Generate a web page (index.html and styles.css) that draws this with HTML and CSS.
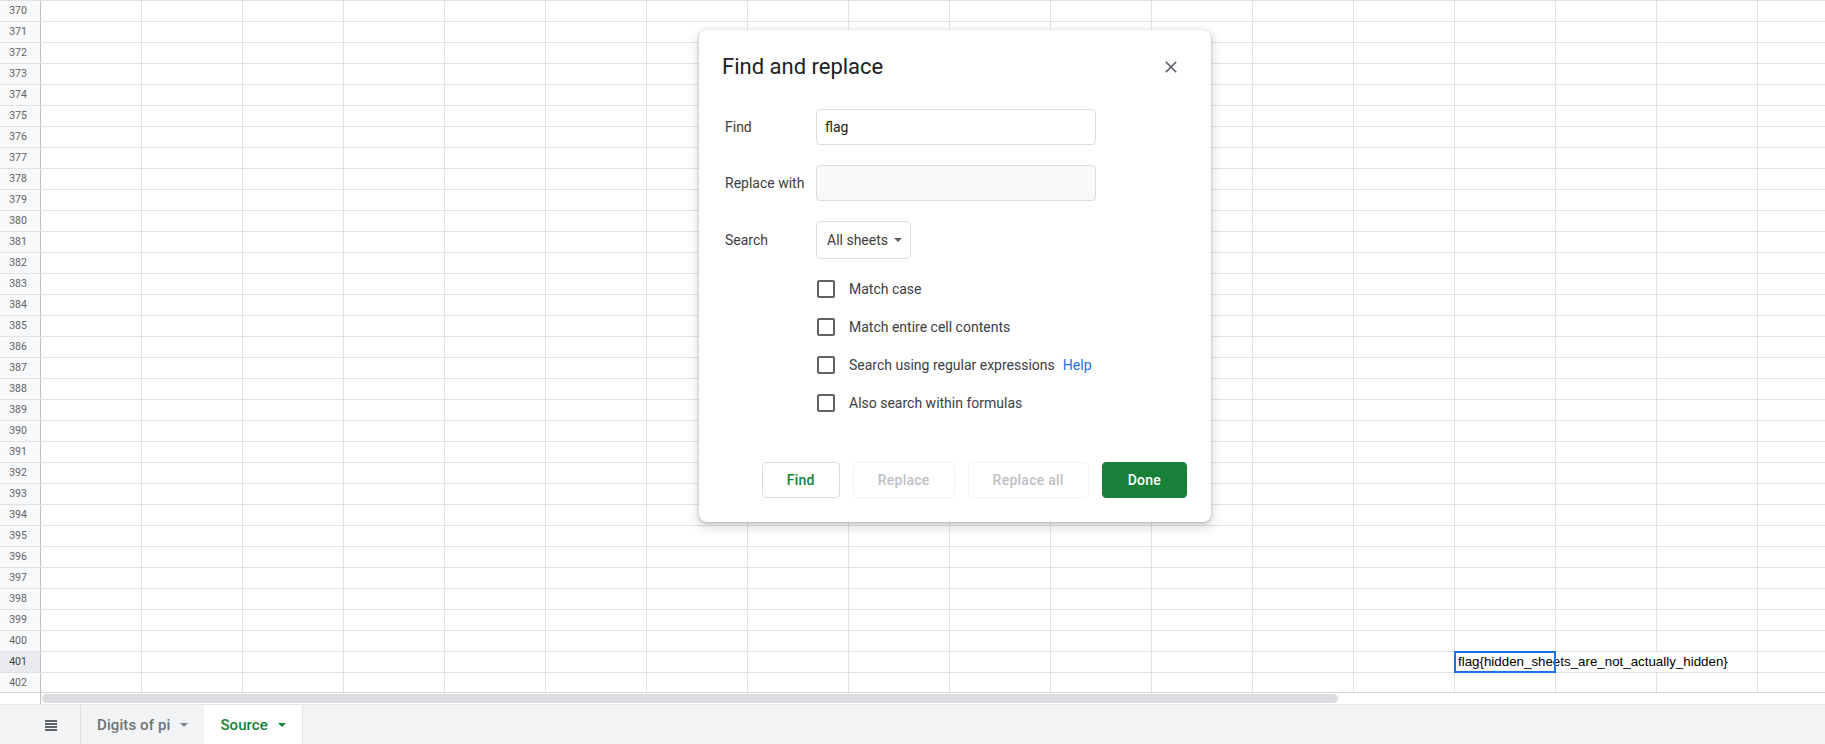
FILE: index.html
```html
<!DOCTYPE html>
<html lang="en">
<head>
<meta charset="utf-8">
<title>Source - Google Sheets</title>
<link rel="stylesheet" href="styles.css">
</head>
<body>
<div class="app">
  <div class="sheet">
    <div class="row"><div class="rh">370</div><div class="cells"></div></div>
    <div class="row"><div class="rh">371</div><div class="cells"></div></div>
    <div class="row"><div class="rh">372</div><div class="cells"></div></div>
    <div class="row"><div class="rh">373</div><div class="cells"></div></div>
    <div class="row"><div class="rh">374</div><div class="cells"></div></div>
    <div class="row"><div class="rh">375</div><div class="cells"></div></div>
    <div class="row"><div class="rh">376</div><div class="cells"></div></div>
    <div class="row"><div class="rh">377</div><div class="cells"></div></div>
    <div class="row"><div class="rh">378</div><div class="cells"></div></div>
    <div class="row"><div class="rh">379</div><div class="cells"></div></div>
    <div class="row"><div class="rh">380</div><div class="cells"></div></div>
    <div class="row"><div class="rh">381</div><div class="cells"></div></div>
    <div class="row"><div class="rh">382</div><div class="cells"></div></div>
    <div class="row"><div class="rh">383</div><div class="cells"></div></div>
    <div class="row"><div class="rh">384</div><div class="cells"></div></div>
    <div class="row"><div class="rh">385</div><div class="cells"></div></div>
    <div class="row"><div class="rh">386</div><div class="cells"></div></div>
    <div class="row"><div class="rh">387</div><div class="cells"></div></div>
    <div class="row"><div class="rh">388</div><div class="cells"></div></div>
    <div class="row"><div class="rh">389</div><div class="cells"></div></div>
    <div class="row"><div class="rh">390</div><div class="cells"></div></div>
    <div class="row"><div class="rh">391</div><div class="cells"></div></div>
    <div class="row"><div class="rh">392</div><div class="cells"></div></div>
    <div class="row"><div class="rh">393</div><div class="cells"></div></div>
    <div class="row"><div class="rh">394</div><div class="cells"></div></div>
    <div class="row"><div class="rh">395</div><div class="cells"></div></div>
    <div class="row"><div class="rh">396</div><div class="cells"></div></div>
    <div class="row"><div class="rh">397</div><div class="cells"></div></div>
    <div class="row"><div class="rh">398</div><div class="cells"></div></div>
    <div class="row"><div class="rh">399</div><div class="cells"></div></div>
    <div class="row"><div class="rh">400</div><div class="cells"></div></div>
    <div class="row row-active"><div class="rh">401</div><div class="cells cells-grid"><div class="flag-cell"><span class="cell-text">flag{hidden_sheets_are_not_actually_hidden}</span><div class="selection"></div></div></div></div>
    <div class="row"><div class="rh">402</div><div class="cells"></div></div>
  </div>
  <div class="hscroll">
    <div class="hscroll-corner"></div>
    <div class="hscroll-track"><div class="hscroll-thumb"></div></div>
  </div>
  <div class="tabbar">
    <div class="tab-menu">
      <svg class="menu-icon" width="12" height="11" viewBox="0 0 12 11"><rect x="0" y="0" width="12" height="2" fill="#5f6368"/><rect x="0" y="3" width="12" height="2" fill="#5f6368"/><rect x="0" y="6" width="12" height="2" fill="#5f6368"/><rect x="0" y="9" width="12" height="2" fill="#5f6368"/></svg>
    </div>
    <div class="tab"><span class="tab-name">Digits of pi</span><span class="tab-arrow"></span></div>
    <div class="tab tab-active"><span class="tab-name">Source</span><span class="tab-arrow"></span></div>
  </div>
</div>

<div class="dialog">
  <div class="dialog-head">
    <h1 class="dialog-title">Find and replace</h1>
    <svg class="close-icon" width="20" height="20" viewBox="0 0 24 24"><path fill="#5f6368" d="M19 6.41L17.59 5 12 10.59 6.41 5 5 6.41 10.59 12 5 17.59 6.41 19 12 13.41 17.59 19 19 17.59 13.41 12z"/></svg>
  </div>
  <div class="field field-find">
    <label class="field-label">Find</label>
    <div class="text-input">flag</div>
  </div>
  <div class="field field-replace">
    <label class="field-label">Replace with</label>
    <div class="text-input text-input-disabled"></div>
  </div>
  <div class="field field-search">
    <label class="field-label">Search</label>
    <div class="select"><span>All sheets</span><span class="select-arrow"></span></div>
  </div>
  <div class="options">
    <div class="option"><span class="checkbox"></span><span>Match case</span></div>
    <div class="option"><span class="checkbox"></span><span>Match entire cell contents</span></div>
    <div class="option"><span class="checkbox"></span><span>Search using regular expressions</span><a class="help">Help</a></div>
    <div class="option"><span class="checkbox"></span><span>Also search within formulas</span></div>
  </div>
  <div class="buttons">
    <button class="btn btn-outline">Find</button>
    <button class="btn btn-disabled">Replace</button>
    <button class="btn btn-disabled">Replace all</button>
    <button class="btn btn-primary">Done</button>
  </div>
</div>
</body>
</html>
```

FILE: styles.css
```css
html, body {
  margin: 0;
  padding: 0;
}
body {
  width: 1825px;
  height: 744px;
  overflow: hidden;
  background: #fff;
  font-family: Roboto, "Liberation Sans", Arial, sans-serif;
  position: relative;
}
.app {
  display: flex;
  flex-direction: column;
  height: 744px;
}

/* grid */
.sheet {
  height: 692px;
  overflow: hidden;
  border-bottom: 1px solid #d4d4d4;
  flex: none;
}
.row {
  display: flex;
  height: 21px;
  box-sizing: border-box;
  border-top: 1px solid #e2e2e3;
}
.rh {
  width: 41px;
  flex: none;
  box-sizing: border-box;
  padding-right: 4px;
  background: #f8f9fa;
  border-right: 1px solid #c0c0c0;
  color: #5f6368;
  font-size: 10.5px;
  line-height: 20px;
  text-align: center;
}
.row-active .rh {
  background: #e8eaed;
  color: #3c4043;
}
.cells {
  flex: 1;
  background: repeating-linear-gradient(to right, transparent 0 100px, #e2e2e3 100px 101px);
}
.cells-grid {
  display: grid;
  grid-template-columns: repeat(18, 101px);
}
.flag-cell {
  grid-column: 15 / span 3;
  width: 302px;
  height: 20px;
  background: #fff;
  position: relative;
}
.cell-text {
  display: block;
  padding-left: 3px;
  font-family: "Liberation Sans", Arial, sans-serif;
  font-size: 13.333px;
  line-height: 20px;
  color: #000;
  white-space: nowrap;
}
.selection {
  position: absolute;
  left: -1px;
  top: -1px;
  width: 102px;
  height: 22px;
  box-sizing: border-box;
  border: 2px solid #1a73e8;
}

/* horizontal scroll */
.hscroll {
  display: flex;
  height: 11px;
  flex: none;
}
.hscroll-corner {
  width: 41px;
  box-sizing: border-box;
  border-right: 1px solid #c0c0c0;
}
.hscroll-track {
  flex: 1;
  padding-top: 1px;
}
.hscroll-thumb {
  margin-left: 1px;
  width: 1296px;
  height: 9px;
  border-radius: 5px;
  background: #dadce0;
}

/* tab bar */
.tabbar {
  flex: 1;
  display: flex;
  background: #f1f3f4;
  border-top: 1px solid #e3e5e8;
}
.tab-menu {
  width: 81px;
  box-sizing: border-box;
  border-right: 1px solid #dadce0;
  display: flex;
  align-items: center;
  padding-left: 45px;
}
.menu-icon {
  display: block;
  margin-top: 1px;
}
.tab {
  display: flex;
  align-items: center;
  gap: 10px;
  padding: 0 16px;
  font-size: 15px;
  font-weight: 500;
  color: #6f7377;
  letter-spacing: 0.1px;
}
.tab-arrow {
  width: 0;
  height: 0;
  border-left: 4px solid transparent;
  border-right: 4px solid transparent;
  border-top: 4px solid #80868b;
}
.tab-active {
  background: #fff;
  color: #188038;
  border-right: 1px solid #e3e5e8;
}
.tab-active .tab-arrow {
  border-top-color: #188038;
}

/* dialog */
.dialog {
  position: absolute;
  left: 699px;
  top: 30px;
  width: 512px;
  box-sizing: border-box;
  padding: 23px 24px 24px;
  background: #fff;
  border-radius: 8px;
  box-shadow: 0 4px 8px 3px rgba(60, 64, 67, 0.15), 0 1px 3px rgba(60, 64, 67, 0.3);
  color: #3c4043;
  font-size: 14px;
}
.dialog-head {
  display: flex;
  align-items: center;
  justify-content: space-between;
  height: 28px;
}
.dialog-title {
  margin: 0 0 0 -1px;
  font-size: 22px;
  font-weight: 400;
  color: #202124;
  line-height: 28px;
}
.close-icon {
  display: block;
  margin-right: 6px;
}
.field {
  display: flex;
  align-items: center;
}
.field-find { margin-top: 28px; }
.field-replace { margin-top: 20px; }
.field-search { margin-top: 20px; }
.field-label {
  width: 93px;
  box-sizing: border-box;
  padding-left: 2px;
  color: #3c4043;
}
.text-input {
  width: 280px;
  height: 36px;
  box-sizing: border-box;
  border: 1px solid #dadce0;
  border-radius: 4px;
  padding: 0 8px;
  display: flex;
  align-items: center;
  color: #202124;
}
.text-input-disabled {
  background: #f8f9fa;
}
.select {
  height: 38px;
  box-sizing: border-box;
  border: 1px solid #dadce0;
  border-radius: 4px;
  padding: 0 8px 0 10px;
  display: flex;
  align-items: center;
  gap: 6px;
  color: #3c4043;
}
.select-arrow {
  width: 0;
  height: 0;
  border-left: 4.5px solid transparent;
  border-right: 4.5px solid transparent;
  border-top: 4.5px solid #5f6368;
}
.options {
  margin-top: 11px;
  margin-left: 94px;
}
.option {
  height: 38px;
  display: flex;
  align-items: center;
  color: #3c4043;
}
.checkbox {
  width: 18px;
  height: 18px;
  box-sizing: border-box;
  border: 2px solid #5f6368;
  border-radius: 2px;
  margin-right: 14px;
  flex: none;
}
.help {
  color: #1a73e8;
  margin-left: 8px;
}
.buttons {
  margin-top: 40px;
  display: flex;
  justify-content: flex-end;
  gap: 13px;
}
.btn {
  height: 36px;
  box-sizing: border-box;
  padding: 0 24px;
  border-radius: 4px;
  font-family: Roboto, "Liberation Sans", Arial, sans-serif;
  font-size: 14px;
  font-weight: 500;
  letter-spacing: 0.25px;
  background: #fff;
  border: 1px solid #dadce0;
}
.btn-outline {
  color: #188038;
}
.btn-disabled {
  color: #bdc1c6;
  border-color: #f1f3f4;
}
.btn-primary {
  background: #188038;
  border-color: #188038;
  color: #fff;
  padding: 0 25px;
}
```
